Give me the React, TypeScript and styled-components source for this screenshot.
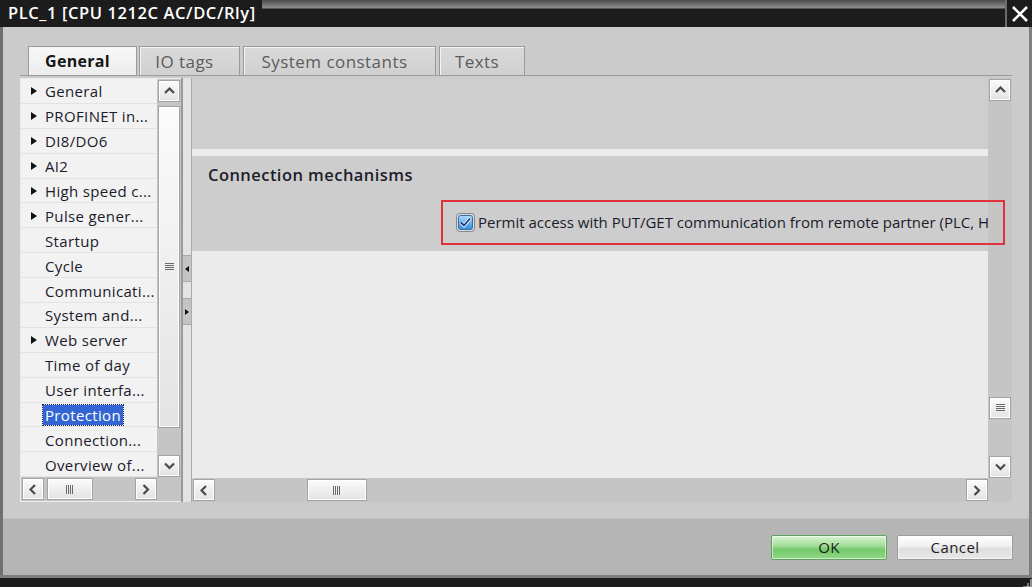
import React from "react";
import styled, { createGlobalStyle } from "styled-components";

const GlobalStyle = createGlobalStyle`
  html, body { margin: 0; padding: 0; background: #1c1c1c; }
  body { font-family: "Open Sans", "Noto Sans", sans-serif; }
  #root { width: 1032px; height: 587px; }
  * { box-sizing: border-box; }
`;

const Window = styled.div`
  width: 1032px;
  height: 587px;
  display: flex;
  flex-direction: column;
  overflow: hidden;
  background: #1c1c1c;
`;

const TitleBar = styled.div`
  height: 27px;
  flex: none;
  display: flex;
  align-items: stretch;
  background: linear-gradient(to bottom, #4c4c4c 0px, #8e8e8e 8px, #1c1c1c 9px, #1c1c1c 100%);
`;

const Title = styled.div`
  background: #1c1c1c;
  color: #ffffff;
  font-size: 16.5px;
  font-weight: 600;
  letter-spacing: 0.6px;
  line-height: 26px;
  padding: 0 8px 0 8px;
  width: 262px;
  white-space: nowrap;
`;

const TitleSpacer = styled.div`
  flex: 1;
`;

const CloseBox = styled.div`
  width: 27px;
  background: #1c1c1c;
  border-left: 2px solid #6b6b6b;
  display: flex;
  align-items: center;
  justify-content: center;
`;

const Chrome = styled.div`
  flex: none;
  display: flex;
  flex-direction: column;
  border-left: 3px solid #707070;
  border-right: 3px solid #808080;
`;

const Body = styled.div`
  height: 491px;
  background: #cbcbcb;
  padding: 20px 17px 0 17px;
  display: flex;
  flex-direction: column;
  min-width: 0;
`;

const TabRow = styled.div`
  height: 29px;
  display: flex;
  align-items: flex-end;
  padding-left: 8px;
  border-bottom: 1px solid #9c9c9c;
`;

const Tab = styled.div<{ $active?: boolean; $w: number; $gap: number }>`
  width: ${(p) => p.$w}px;
  margin-right: ${(p) => p.$gap}px;
  height: 29px;
  display: flex;
  align-items: center;
  justify-content: center;
  padding-right: 10px;
  font-size: ${(p) => (p.$active ? 16 : 17)}px;
  letter-spacing: ${(p) => (p.$active ? 0.3 : 0.45)}px;
  border: 1px solid #9a9a9a;
  border-bottom: none;
  box-shadow: inset 1px 1px 0 #f4f4f4;
  color: ${(p) => (p.$active ? "#161616" : "#5c5c5c")};
  font-weight: ${(p) => (p.$active ? 700 : 400)};
  background: ${(p) =>
    p.$active ? "linear-gradient(#f8f8f8, #ececec)" : "linear-gradient(#dadada, #d0d0d0)"};
`;

const Panels = styled.div`
  height: 426px;
  padding-top: 2px;
  display: flex;
  min-width: 0;
`;

const TreePanel = styled.div`
  width: 161px;
  flex: none;
  display: flex;
  border: 1px solid #ececec;
  border-right: none;
`;

const PanelColumn = styled.div`
  flex: 1;
  min-width: 0;
  display: flex;
  flex-direction: column;
`;

const TreeList = styled.div`
  flex: 1;
  background: #f2f2f2;
  display: flex;
  flex-direction: column;
  overflow: hidden;
`;

const TreeRow = styled.div`
  height: 24.9px;
  flex: none;
  display: flex;
  align-items: center;
  padding-left: 10px;
  padding-top: 1px;
  border-bottom: 1px solid #e3e3e3;
  font-size: 15px;
  letter-spacing: 0.35px;
  color: #1b1b2b;
  white-space: nowrap;
`;

const Caret = styled.span<{ $show: boolean }>`
  width: 14px;
  flex: none;
  display: flex;
  align-items: center;
  &::before {
    content: "";
    display: ${(p) => (p.$show ? "block" : "none")};
    border-left: 6px solid #111;
    border-top: 4.5px solid transparent;
    border-bottom: 4.5px solid transparent;
  }
`;

const TreeLabel = styled.span<{ $selected?: boolean }>`
  line-height: 20px;
  padding: 0 2px;
  margin-left: -2px;
  color: ${(p) => (p.$selected ? "#ffffff" : "inherit")};
  background: ${(p) => (p.$selected ? "#3265d3" : "transparent")};
  outline: ${(p) => (p.$selected ? "1px dotted #0b1f55" : "none")};
`;

const VScroll = styled.div`
  width: 24px;
  flex: none;
  display: flex;
  flex-direction: column;
  align-items: center;
  background: #c5c5c5;
  padding-top: 1px;
`;

const ScrollBtn = styled.div`
  width: 22px;
  height: 22px;
  flex: none;
  border: 1px solid #a4a4a4;
  background: linear-gradient(#fbfbfb, #e3e3e3);
  box-shadow: inset 0 0 0 1px #ffffff;
  display: flex;
  align-items: center;
  justify-content: center;
`;

const VTrack = styled.div`
  flex: 1;
  display: flex;
  flex-direction: column;
  align-items: center;
`;

const VThumb = styled(ScrollBtn)<{ $offset: number; $size: number }>`
  margin-top: ${(p) => p.$offset}px;
  height: ${(p) => p.$size}px;
`;

const Corner = styled.div`
  height: 24px;
  flex: none;
`;

const HScroll = styled.div<{ $pad: number }>`
  height: 24px;
  flex: none;
  display: flex;
  align-items: center;
  background: #c5c5c5;
  padding: 0 0 0 ${(p) => p.$pad}px;
`;

const HTrack = styled.div`
  flex: 1;
  display: flex;
  align-items: center;
`;

const HThumb = styled(ScrollBtn)<{ $offset: number; $size: number }>`
  margin-left: ${(p) => p.$offset}px;
  width: ${(p) => p.$size}px;
`;

const Splitter = styled.div`
  width: 11px;
  flex: none;
  display: flex;
  flex-direction: column;
  justify-content: center;
  align-items: center;
  gap: 16px;
  background: #e3e3e3;
  border-left: 2px solid #9a9a9a;
  border-right: 1px solid #ababab;
`;

const SplitBtn = styled.div<{ $dir: "left" | "right" }>`
  width: 8px;
  height: 27px;
  background: #c4c4c4;
  border-top: 1px solid #a9a9a9;
  border-bottom: 1px solid #a9a9a9;
  display: flex;
  align-items: center;
  justify-content: center;
  &::before {
    content: "";
    border-top: 3.5px solid transparent;
    border-bottom: 3.5px solid transparent;
    ${(p) => (p.$dir === "left" ? "border-right: 4px solid #111;" : "border-left: 4px solid #111;")}
  }
`;

const ContentPanel = styled.div`
  flex: 1;
  min-width: 0;
  display: flex;
  position: relative;
`;

const ContentArea = styled.div`
  flex: 1;
  min-height: 0;
  display: flex;
  flex-direction: column;
  background: #ebebeb;
  overflow: hidden;
`;

const TopBlock = styled.div`
  height: 71px;
  flex: none;
  background: #cecece;
`;

const Divider = styled.div`
  height: 7px;
  flex: none;
  background: #ececec;
`;

const Section = styled.div`
  height: 95px;
  flex: none;
  background: #cdcdcd;
  padding: 8px 0 0 16px;
  display: flex;
  flex-direction: column;
`;

const SectionTitle = styled.div`
  font-size: 16.5px;
  font-weight: 600;
  line-height: 22px;
  color: #1d1d2b;
  letter-spacing: 0.45px;
  white-space: nowrap;
`;

const OptionRow = styled.label`
  margin-top: 26px;
  padding-left: 248px;
  display: flex;
  align-items: center;
  gap: 3px;
  font-size: 15px;
  letter-spacing: 0;
  color: #1b1b2b;
  white-space: nowrap;
  & > svg {
    flex: none;
  }
`;

const Annotation = styled.div`
  position: absolute;
  left: 249px;
  top: 122px;
  width: 564px;
  height: 45px;
  border: 2px solid #e0323c;
  pointer-events: none;
`;

const Footer = styled.div`
  height: 57px;
  background: #b5b5b5;
  border-top: 1px solid #c2c2c2;
  display: flex;
  align-items: center;
  justify-content: flex-end;
  gap: 10px;
  padding-right: 16px;
`;

const DialogButton = styled.button<{ $primary?: boolean }>`
  width: 116px;
  height: 25px;
  border-radius: 2px;
  font-family: "Open Sans", "Noto Sans", sans-serif;
  font-size: 15px;
  letter-spacing: 0.4px;
  color: #1e1e1e;
  padding: 0;
  border: 1px solid ${(p) => (p.$primary ? "#62a062" : "#9c9c9c")};
  background: ${(p) =>
    p.$primary
      ? "linear-gradient(#d8f4d2, #a6e09c 40%, #74c96a 60%, #92d889)"
      : "linear-gradient(#ffffff, #f0f0f0 45%, #dedede 55%, #e8e8e8)"};
  box-shadow: inset 0 0 0 1px rgba(255, 255, 255, 0.55);
`;

const BottomBar = styled.div`
  flex: 1;
  border-top: 3px solid #7e7e7e;
  background: #1c1c1c;
  display: flex;
  justify-content: flex-end;
  align-items: flex-end;
`;

const Chevron = ({ dir }: { dir: "up" | "down" | "left" | "right" }) => {
  const d = {
    up: "M1 6 L5.5 1.5 L10 6",
    down: "M1 1.5 L5.5 6 L10 1.5",
    left: "M6 1 L1.5 5.5 L6 10",
    right: "M1.5 1 L6 5.5 L1.5 10",
  }[dir];
  const w = dir === "up" || dir === "down" ? 11 : 8;
  const h = dir === "up" || dir === "down" ? 8 : 11;
  return (
    <svg width={w} height={h} viewBox={`0 0 ${w} ${h}`}>
      <path d={d} fill="none" stroke="#4a4a4a" strokeWidth="2.2" />
    </svg>
  );
};

const GripH = () => (
  <svg width="9" height="8" viewBox="0 0 9 8">
    {[0, 2, 4, 6].map((y) => (
      <rect key={y} x="0" y={y} width="9" height="1" fill="#6a6a6a" />
    ))}
  </svg>
);

const GripV = () => (
  <svg width="8" height="9" viewBox="0 0 8 9">
    {[0, 2, 4, 6].map((x) => (
      <rect key={x} x={x} y="0" width="1" height="9" fill="#6a6a6a" />
    ))}
  </svg>
);

const CheckBox = () => (
  <svg width="19" height="19" viewBox="0 0 19 19">
    <defs>
      <linearGradient id="cbg" x1="0" y1="0" x2="0" y2="1">
        <stop offset="0" stopColor="#a9dcfb" />
        <stop offset="1" stopColor="#2f8ddd" />
      </linearGradient>
    </defs>
    <rect x="0.5" y="0.5" width="18" height="18" rx="3" fill="#d8d8d8" stroke="#7d8a96" />
    <rect x="2.5" y="2.5" width="14" height="14" rx="2" fill="url(#cbg)" stroke="#3d6f9e" />
    <path d="M5 9.5 L8 12.5 L14 5.5" fill="none" stroke="#ffffff" strokeWidth="3.4" />
    <path d="M5 9.5 L8 12.5 L14 5.5" fill="none" stroke="#16367f" strokeWidth="1.8" />
  </svg>
);

const CloseIcon = () => (
  <svg width="18" height="16" viewBox="0 0 18 16">
    <path d="M2 1 L16 15 M16 1 L2 15" stroke="#ffffff" strokeWidth="2.6" />
  </svg>
);

const ResizeGrip = () => (
  <svg width="12" height="10" viewBox="0 0 12 10">
    <path d="M11 1 V9 H3" fill="none" stroke="#d8d8d8" strokeWidth="1.2" />
    <path d="M8 5 V9 M8 9 H6" fill="none" stroke="#d8d8d8" strokeWidth="1" />
  </svg>
);

const treeItems: { label: string; caret: boolean; selected?: boolean }[] = [
  { label: "General", caret: true },
  { label: "PROFINET in...", caret: true },
  { label: "DI8/DO6", caret: true },
  { label: "AI2", caret: true },
  { label: "High speed c...", caret: true },
  { label: "Pulse gener...", caret: true },
  { label: "Startup", caret: false },
  { label: "Cycle", caret: false },
  { label: "Communicati...", caret: false },
  { label: "System and...", caret: false },
  { label: "Web server", caret: true },
  { label: "Time of day", caret: false },
  { label: "User interfa...", caret: false },
  { label: "Protection", caret: false, selected: true },
  { label: "Connection...", caret: false },
  { label: "Overview of...", caret: false },
];

const tabs = [
  { label: "General", w: 109, gap: 2, active: true },
  { label: "IO tags", w: 101, gap: 3 },
  { label: "System constants", w: 193, gap: 3 },
  { label: "Texts", w: 86, gap: 0 },
];

export default function App() {
  return (
    <>
      <GlobalStyle />
      <Window>
        <TitleBar>
          <Title>PLC_1 [CPU 1212C AC/DC/Rly]</Title>
          <TitleSpacer />
          <CloseBox>
            <CloseIcon />
          </CloseBox>
        </TitleBar>
        <Chrome>
          <Body>
            <TabRow>
              {tabs.map((t) => (
                <Tab key={t.label} $active={t.active} $w={t.w} $gap={t.gap}>
                  {t.label}
                </Tab>
              ))}
            </TabRow>
            <Panels>
              <TreePanel>
                <PanelColumn>
                  <TreeList>
                    {treeItems.map((it) => (
                      <TreeRow key={it.label}>
                        <Caret $show={it.caret} />
                        <TreeLabel $selected={it.selected}>{it.label}</TreeLabel>
                      </TreeRow>
                    ))}
                  </TreeList>
                  <HScroll $pad={1}>
                    <ScrollBtn>
                      <Chevron dir="left" />
                    </ScrollBtn>
                    <HTrack>
                      <HThumb $offset={3} $size={46}>
                        <GripV />
                      </HThumb>
                    </HTrack>
                    <ScrollBtn>
                      <Chevron dir="right" />
                    </ScrollBtn>
                  </HScroll>
                </PanelColumn>
                <VScroll>
                  <ScrollBtn>
                    <Chevron dir="up" />
                  </ScrollBtn>
                  <VTrack>
                    <VThumb $offset={4} $size={322}>
                      <GripH />
                    </VThumb>
                  </VTrack>
                  <ScrollBtn>
                    <Chevron dir="down" />
                  </ScrollBtn>
                  <Corner />
                </VScroll>
              </TreePanel>
              <Splitter>
                <SplitBtn $dir="left" />
                <SplitBtn $dir="right" />
              </Splitter>
              <ContentPanel>
                <PanelColumn>
                  <ContentArea>
                    <TopBlock />
                    <Divider />
                    <Section>
                      <SectionTitle>Connection mechanisms</SectionTitle>
                      <OptionRow>
                        <CheckBox />
                        <span>
                          Permit access with PUT/GET communication from remote partner (PLC, HMI, OPC, ...)
                        </span>
                      </OptionRow>
                    </Section>
                  </ContentArea>
                  <HScroll $pad={1}>
                    <ScrollBtn>
                      <Chevron dir="left" />
                    </ScrollBtn>
                    <HTrack>
                      <HThumb $offset={92} $size={60}>
                        <GripV />
                      </HThumb>
                    </HTrack>
                    <ScrollBtn>
                      <Chevron dir="right" />
                    </ScrollBtn>
                  </HScroll>
                </PanelColumn>
                <VScroll>
                  <ScrollBtn>
                    <Chevron dir="up" />
                  </ScrollBtn>
                  <VTrack>
                    <VThumb $offset={296} $size={22}>
                      <GripH />
                    </VThumb>
                  </VTrack>
                  <ScrollBtn>
                    <Chevron dir="down" />
                  </ScrollBtn>
                  <Corner />
                </VScroll>
                <Annotation />
              </ContentPanel>
            </Panels>
          </Body>
          <Footer>
            <DialogButton $primary>OK</DialogButton>
            <DialogButton>Cancel</DialogButton>
          </Footer>
        </Chrome>
        <BottomBar>
          <ResizeGrip />
        </BottomBar>
      </Window>
    </>
  );
}
